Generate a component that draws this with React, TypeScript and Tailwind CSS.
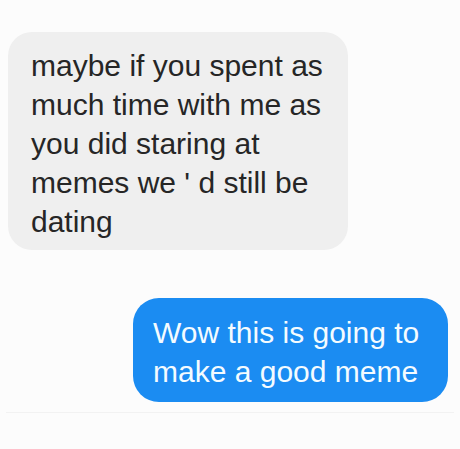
import React from 'react';

const App: React.FC = () => {
  return (
    <div
      className="w-[460px] h-[449px] bg-[#fcfcfc] flex flex-col overflow-hidden"
      style={{ fontFamily: '"Liberation Sans", Arial, sans-serif' }}
    >
      {/* Received message */}
      <div className="ml-[8px] mt-[32px] w-[340px] h-[218px] rounded-[24px] bg-[#efefef] pl-[23px] pt-[14px] text-[30px] leading-[39px] text-[#262626] whitespace-nowrap">
        maybe if you spent as
        <br />
        much time with me as
        <br />
        you did staring at
        <br />
        memes we ' d still be
        <br />
        dating
      </div>

      {/* Sent message */}
      <div className="self-end mr-[12px] mt-[48px] w-[315px] h-[104px] rounded-[26px] bg-[#1b8cf2] pl-[20px] pt-[15px] text-[30px] leading-[39px] text-[#f4fbff] whitespace-nowrap">
        Wow this is going to
        <br />
        make a good meme
      </div>

      <div className="mt-[10px] mx-[6px] border-t border-[#f2f2f2]" />
    </div>
  );
};

export default App;
